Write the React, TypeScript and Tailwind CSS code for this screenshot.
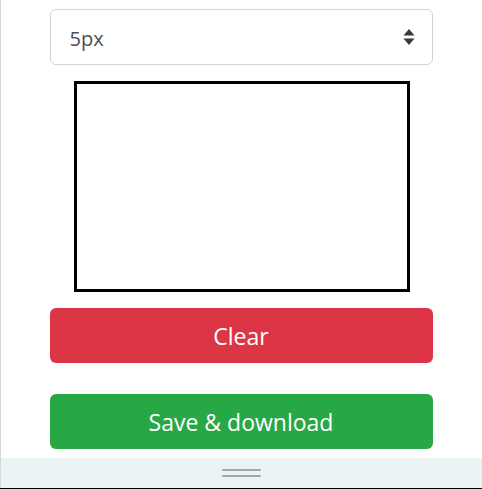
import React from "react";

export default function App() {
  return (
    <div className="w-[482px] h-[489px] flex flex-col bg-white" style={{ fontFamily: '"Open Sans", "Noto Sans", sans-serif' }}>
      <div className="flex-1 border-l border-[#d3d8dc] flex flex-col items-center pt-[9px]">
        <div className="relative w-[383px] h-[56px] ml-[-1px]">
          <select
            defaultValue="5px"
            className="appearance-none w-full h-full border border-[#ced4da] rounded-[6px] bg-white pl-[19px] pt-[3px] text-[20px] text-[#495057] outline-none"
            style={{ fontFamily: '"Open Sans", "Noto Sans", sans-serif' }}
          >
            <option>1px</option>
            <option>2px</option>
            <option>5px</option>
            <option>10px</option>
          </select>
          <svg className="absolute right-[18px] top-[20px] pointer-events-none" width="12" height="16" viewBox="0 0 12 16">
            <path d="M6 0 L11.5 6.5 H0.5 Z" fill="#343a40" />
            <path d="M6 16 L11.5 9.5 H0.5 Z" fill="#343a40" />
          </svg>
        </div>
        <div className="mt-[16px] w-[336px] h-[211px] border-[3px] border-black bg-white" />
        <button className="mt-[16px] w-[383px] h-[55px] rounded-[6px] bg-[#dc3545] text-white text-[23px] pt-[2px] ml-[-1px]">
          Clear
        </button>
        <button className="mt-[31px] w-[383px] h-[55px] rounded-[6px] bg-[#28a745] text-white text-[23px] pt-[2px] ml-[-1px]">
          Save &amp; download
        </button>
      </div>
      <div className="h-[30px] bg-[#eaf4f5] border-l border-[#d3d8dc] flex flex-col items-center justify-center gap-[4px]">
        <div className="w-[39px] h-[2px] rounded-full bg-[#a6a6a6]" />
        <div className="w-[39px] h-[2px] rounded-full bg-[#a6a6a6]" />
      </div>
      <div className="h-[1px] bg-black" />
    </div>
  );
}
